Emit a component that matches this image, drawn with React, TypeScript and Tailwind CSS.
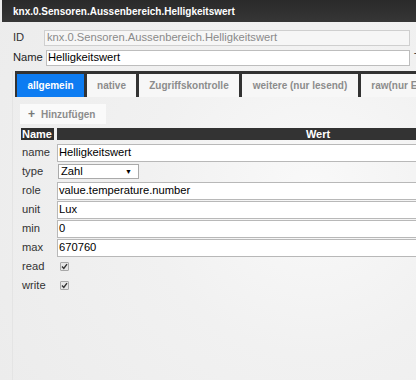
import React from "react";

const font = { fontFamily: '"Liberation Sans", Arial, sans-serif' };

function Check() {
  return (
    <div className="w-[9px] h-[9px] border border-[#a8a8a8] bg-[#e6e6e6] rounded-[1px] flex items-center justify-center">
      <svg width="7" height="7" viewBox="0 0 7 7">
        <path d="M1 3.6 L2.8 5.4 L6 1.2" stroke="#333" strokeWidth="1.4" fill="none" />
      </svg>
    </div>
  );
}

function Row({ label, children }: { label: string; children: React.ReactNode }) {
  return (
    <div className="flex items-center h-[19px]">
      <div className="w-[36px] shrink-0 pl-[1px] text-[11.2px] text-[#333] leading-none">{label}</div>
      {children}
    </div>
  );
}

function TextInput({ value }: { value: string }) {
  return (
    <div className="h-[18px] w-[520px] shrink-0 border border-[#b8b8b8] bg-white flex items-center pl-[1px] text-[11.2px] text-black leading-none">
      {value}
    </div>
  );
}

export default function App() {
  const tabs = [
    { t: "allgemein", w: "w-[67px]", active: true },
    { t: "native", w: "w-[49px]" },
    { t: "Zugriffskontrolle", w: "w-[100px]" },
    { t: "weitere (nur lesend)", w: "w-[116px]" },
    { t: "raw(nur Experte)", w: "w-[100px]" },
  ];
  return (
    <div
      style={font}
      className="w-[416px] h-[380px] overflow-hidden bg-[radial-gradient(circle_at_75%_50%,#f9f9f9_0%,#f1f1f1_45%,#ececec_100%)]"
    >
      <div className="ml-[2px] h-[22px] bg-[linear-gradient(#2a2a2a,#363636)] flex items-center pl-[11px] text-white font-bold text-[10px]">
        knx.0.Sensoren.Aussenbereich.Helligkeitswert
      </div>

      <div className="flex items-center mt-[8px] h-[16px]">
        <div className="w-[44px] shrink-0 pl-[13px] text-[11.2px] text-[#333] leading-none">ID</div>
        <div className="w-[366px] shrink-0 h-[16px] border border-[#cfcfcf] bg-[#f6f6f6] flex items-center pl-[2px] text-[11.2px] text-[#8a8a8a] leading-none">
          knx.0.Sensoren.Aussenbereich.Helligkeitswert
        </div>
      </div>

      <div className="flex items-center mt-[4px] h-[16px] overflow-hidden">
        <div className="w-[46px] shrink-0 pl-[13px] text-[11.2px] text-[#222] leading-none">Name</div>
        <div className="w-[364px] shrink-0 h-[16px] border border-[#bdbdbd] bg-white flex items-center pl-[1px] text-[11.2px] text-black leading-none">
          Helligkeitswert
        </div>
        <div className="ml-[4px] shrink-0 text-[11.2px] text-[#222] leading-none">T</div>
      </div>

      <div className="ml-[12px] border-l border-[#e4e4e4] h-[320px]">
        <div className="mt-[5px] ml-[2px] bg-[#333] pt-[3px] pl-[2px] flex gap-[3px] w-[420px] overflow-hidden">
          {tabs.map((tab) => (
            <div
              key={tab.t}
              className={
                "h-[23px] shrink-0 flex items-center justify-center font-bold text-[10px] whitespace-nowrap " +
                tab.w +
                (tab.active ? " bg-[#0d7cf2] text-white" : " bg-[#f7f7f7] text-[#8c8c8c]")
              }
            >
              {tab.t}
            </div>
          ))}
        </div>

        <div className="mt-[7px] ml-[7px] w-[86px] h-[20px] bg-[#fafafa] flex items-center text-[10px] font-bold text-[#8c8c8c]">
          <span className="ml-[8px] mr-[6px] text-[12px] font-bold text-[#777] leading-none">+</span>
          Hinzufügen
        </div>

        <div className="mt-[4px] ml-[8px]">
          <div className="flex gap-[3px] h-[12px]">
            <div className="w-[33px] shrink-0 bg-[#2f2f2f] text-white font-bold text-[11px] leading-[12px] pl-[1px]">Name</div>
            <div className="w-[522px] shrink-0 bg-[#333] text-white font-bold text-[11px] leading-[12px] text-center">Wert</div>
          </div>
          <div className="mt-[3px]">
            <Row label="name"><TextInput value="Helligkeitswert" /></Row>
            <Row label="type">
              <div className="ml-[1px] shrink-0 w-[81px] h-[15px] border border-[#aaa] bg-white flex items-center justify-between px-[2px] text-[11.2px] text-black leading-none">
                <span>Zahl</span>
                <span className="text-[7px] mr-[4px]">▼</span>
              </div>
            </Row>
            <Row label="role"><TextInput value="value.temperature.number" /></Row>
            <Row label="unit"><TextInput value="Lux" /></Row>
            <Row label="min"><TextInput value="0" /></Row>
            <Row label="max"><TextInput value="670760" /></Row>
            <Row label="read"><div className="ml-[3px] shrink-0"><Check /></div></Row>
            <Row label="write"><div className="ml-[3px] shrink-0"><Check /></div></Row>
          </div>
        </div>
      </div>
    </div>
  );
}
